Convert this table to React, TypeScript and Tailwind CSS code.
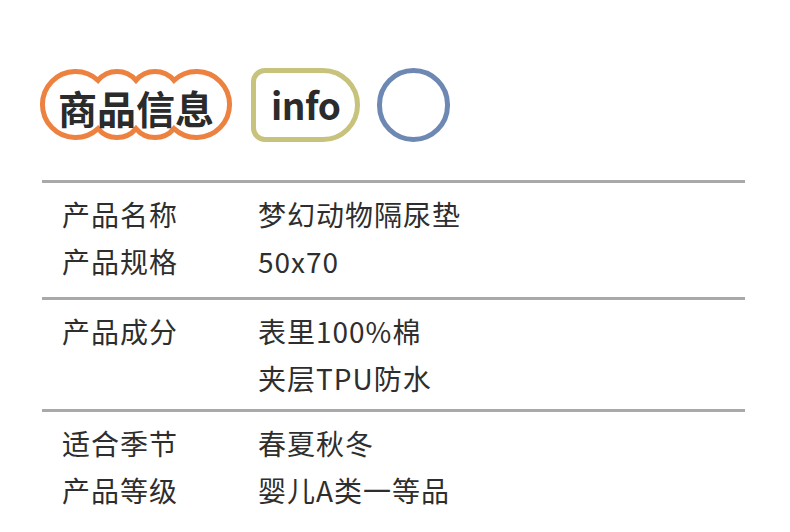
const rows: { label: string; values: string[] }[][] = [
  [
    { label: "产品名称", values: ["梦幻动物隔尿垫"] },
    { label: "产品规格", values: ["50x70"] },
  ],
  [{ label: "产品成分", values: ["表里100%棉", "夹层TPU防水"] }],
  [
    { label: "适合季节", values: ["春夏秋冬"] },
    { label: "产品等级", values: ["婴儿A类一等品"] },
  ],
];

const sectionPad = ["pt-[8px] pb-[12px]", "pt-[8px] pb-[7px]", "pt-[8px] pb-[8px]"];

function CloudBadge() {
  return (
    <div className="relative w-[196px] h-[75px] flex items-center justify-center">
      <svg
        className="absolute inset-0"
        width="196"
        height="75"
        viewBox="0 0 196 75"
        fill="none"
      >
        <path
          d="M60 13.4 A33 33 0 1 0 60 61.6 A24.7 24.7 0 0 0 98 61.6 A24.7 24.7 0 0 0 136 61.6 A33 33 0 1 0 136 13.4 A24.7 24.7 0 0 0 98 13.4 A24.7 24.7 0 0 0 60 13.4 Z"
          stroke="#ec8140"
          strokeWidth="5"
        />
      </svg>
      <span className="relative text-[39px] leading-none font-bold text-[#2b2b2b] mt-[5px]">
        商品信息
      </span>
    </div>
  );
}

export default function App() {
  return (
    <div
      className="w-[790px] h-[532px] bg-white overflow-hidden"
      style={{ fontFamily: '"Noto Sans CJK SC", "Noto Sans", sans-serif' }}
    >
      <div className="flex items-start pl-[38px] pt-[67px] pb-[38px]">
        <CloudBadge />
        <div className="ml-[17px] mt-[1px] w-[109px] h-[74px] border-[5px] border-[#c7c37c] rounded-l-[14px] rounded-r-[37px] flex items-center pl-[15px]">
          <span className="text-[37px] leading-none font-bold tracking-[-0.5px] text-[#2b2b2b] -mt-[2px]">
            info
          </span>
        </div>
        <div className="ml-[17px] mt-[1px] w-[73px] h-[74px] border-[5px] border-[#6d88b3] rounded-full" />
      </div>

      <div className="mx-[42px] w-[703px]">
        {rows.map((section, i) => (
          <div
            key={i}
            className={`border-t-[3px] border-[#a9a9a9] ${sectionPad[i]}`}
          >
            {section.map((row) => (
              <div
                key={row.label}
                className="flex text-[28px] tracking-[1px] text-[#2e2e2e]"
              >
                <div className="w-[216px] pl-[20px] leading-[47px]">{row.label}</div>
                <div className="flex flex-col">
                  {row.values.map((v) => (
                    <div key={v} className="leading-[47px]">
                      {v}
                    </div>
                  ))}
                </div>
              </div>
            ))}
          </div>
        ))}
      </div>
    </div>
  );
}
